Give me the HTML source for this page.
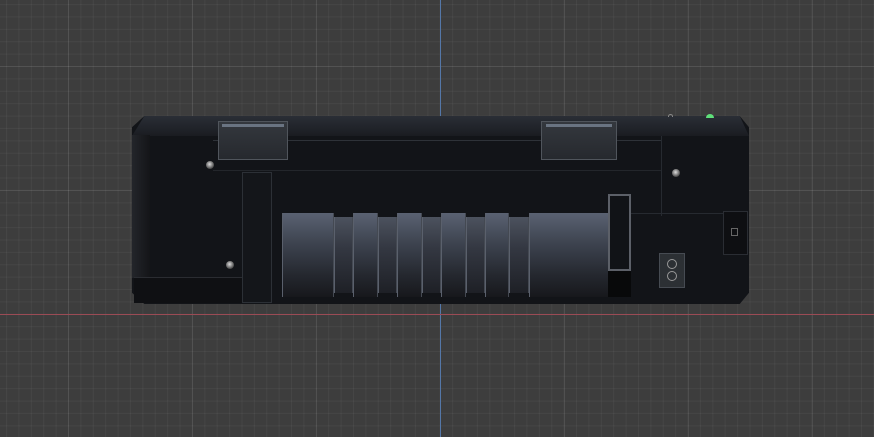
<!DOCTYPE html>
<html><head><style>
*{margin:0;padding:0;box-sizing:border-box}
body{width:874px;height:437px;overflow:hidden;position:relative;
background-color:#3d3d3d;
background-image:
linear-gradient(90deg,rgba(255,255,255,.07) 1px,transparent 1px),
linear-gradient(0deg,rgba(255,255,255,.07) 1px,transparent 1px),
linear-gradient(90deg,rgba(255,255,255,.045) 1px,transparent 1px),
linear-gradient(0deg,rgba(255,255,255,.045) 1px,transparent 1px);
background-size:124px 124px,124px 124px,12.4px 12.4px,12.4px 12.4px;
background-position:68px 0,0 67px,68px 0,0 67px;}
.a{position:absolute}
.seg{position:absolute;background:linear-gradient(180deg,#5a6272 0%,#3e4450 35%,#24272e 75%,#17181c 100%);border-left:1px solid #5a606c;border-right:1px solid #444952}
.g{top:217px;height:76px;background:linear-gradient(180deg,#4c525e 0%,#343842 40%,#1e2026 100%)}
.f{top:213px;height:84px}
.screw{position:absolute;width:8px;height:8px;border-radius:50%;background:radial-gradient(circle at 45% 40%,#ddd 0,#888 40%,#333 80%)}
.hinge{position:absolute;background:linear-gradient(180deg,#34383e,#26292e);border:1px solid #50555c}
</style></head><body>
<div class="a" style="left:440px;top:0;width:1px;height:437px;background:#5477a8"></div>
<div class="a" style="left:0;top:314px;width:874px;height:1px;background:#9b4b55"></div>

<div class="a" style="left:132px;top:116px;width:617px;height:188px;background:#121418;clip-path:polygon(2% 0,98.5% 0,100% 6%,100% 94%,98.5% 100%,2% 100%,0 94%,0 6%)"></div>
<div class="a" style="left:132px;top:116px;width:617px;height:20px;background:linear-gradient(180deg,#2a2e36,#1a1c21);clip-path:polygon(2% 0,98.5% 0,100% 100%,0 100%)"></div>
<div class="a" style="left:132px;top:135px;width:18px;height:143px;background:linear-gradient(90deg,#23252a,#141518)"></div>
<div class="a" style="left:134px;top:277px;width:108px;height:26px;background:#0f1013;border-top:1px solid #2a2c31"></div>
<div class="a" style="left:213px;top:140px;width:448px;height:1px;background:#2e3238"></div>
<div class="a" style="left:213px;top:170px;width:448px;height:1px;background:#23262b"></div>
<div class="a" style="left:661px;top:136px;width:1px;height:80px;background:#262a30"></div>
<div class="a" style="left:630px;top:213px;width:118px;height:1px;background:#262a30"></div>

<div class="hinge" style="left:218px;top:121px;width:70px;height:39px"></div>
<div class="a" style="left:222px;top:124px;width:62px;height:3px;background:#6a7482"></div>
<div class="hinge" style="left:541px;top:121px;width:76px;height:39px"></div>
<div class="a" style="left:546px;top:124px;width:66px;height:3px;background:#6a7482"></div>

<div class="a" style="left:242px;top:172px;width:30px;height:131px;background:#14161a;border:1px solid #2c3036"></div>

<div class="seg f" style="left:282px;width:52px"></div>
<div class="seg g" style="left:334px;width:19px"></div>
<div class="seg f" style="left:353px;width:25px"></div>
<div class="seg g" style="left:378px;width:19px"></div>
<div class="seg f" style="left:397px;width:25px"></div>
<div class="seg g" style="left:422px;width:19px"></div>
<div class="seg f" style="left:441px;width:25px"></div>
<div class="seg g" style="left:466px;width:19px"></div>
<div class="seg f" style="left:485px;width:24px"></div>
<div class="seg g" style="left:509px;width:20px"></div>
<div class="seg f" style="left:529px;width:80px"></div>

<div class="a" style="left:608px;top:194px;width:23px;height:77px;background:#111317;border:2px solid #5c6068"></div>
<div class="a" style="left:608px;top:271px;width:23px;height:26px;background:#08090a"></div>

<div class="a" style="left:659px;top:253px;width:26px;height:35px;background:#2c3034;border:1px solid #464b52"></div>
<div class="a" style="left:667px;top:259px;width:10px;height:10px;border:1px solid #999;border-radius:50%"></div>
<div class="a" style="left:667px;top:271px;width:10px;height:10px;border:1px solid #999;border-radius:50%"></div>

<div class="a" style="left:723px;top:211px;width:25px;height:44px;background:#0e0f12;border:1px solid #2a2d33"></div>
<div class="a" style="left:731px;top:228px;width:7px;height:8px;border:1px solid #666"></div>

<div class="screw" style="left:206px;top:161px"></div>
<div class="screw" style="left:226px;top:261px"></div>
<div class="screw" style="left:672px;top:169px"></div>
<div class="a" style="left:706px;top:114px;width:8px;height:4px;border-radius:4px 4px 0 0;background:#5fe07a"></div>
<div class="a" style="left:668px;top:114px;width:5px;height:3px;border-radius:3px 3px 0 0;border:1px solid #888;border-bottom:none"></div>
</body></html>
